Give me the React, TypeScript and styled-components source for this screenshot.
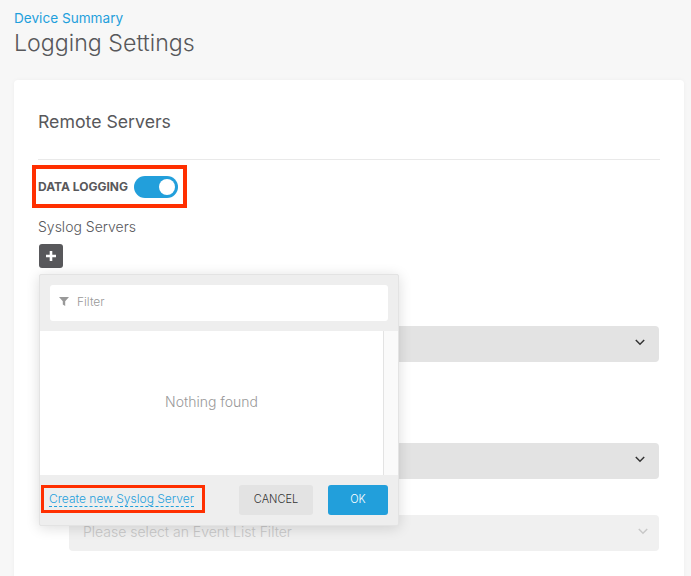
import React from "react";
import styled, { createGlobalStyle } from "styled-components";

const Global = createGlobalStyle`
  html, body { margin: 0; padding: 0; height: 100%; background: #f7f7f7; overflow: hidden; }
  body { font-family: Inter, Roboto, "Liberation Sans", sans-serif; color: #58585b; }
  * { box-sizing: border-box; }
`;

const Page = styled.div`
  width: 691px;
  height: 576px;
  overflow: hidden;
  padding: 10px 7px 0 14px;
`;
const Crumb = styled.a`
  display: block;
  font-size: 13.6px;
  font-weight: 400;
  line-height: 16px;
  color: #1fa0dc;
`;
const Title = styled.h1`
  margin: 1px 0 0;
  font-size: 23.2px;
  font-weight: 300;
  line-height: 33px;
  color: #58585b;
`;
const Card = styled.section`
  position: relative;
  margin-top: 20px;
  height: 600px;
  background: #fff;
  border-radius: 4px 4px 0 0;
  padding: 30px 24px 0 24px;
  box-shadow: 0 0 4px rgba(0, 0, 0, 0.04);
`;
const CardTitle = styled.h2`
  margin: 0;
  font-size: 17.7px;
  font-weight: 400;
  line-height: 24px;
  height: 50px;
  color: #58585b;
  border-bottom: 1px solid #e9e9e9;
`;
const Highlight = styled.div`
  display: inline-flex;
  align-items: center;
  gap: 6px;
  margin: 5px 0 0 -6px;
  width: 155px;
  height: 43px;
  padding-left: 2px;
  border: 4px solid #ff2f00;
`;
const ToggleLabel = styled.span`
  font-size: 12px;
  font-weight: 700;
  color: #58585b;
  white-space: nowrap;
`;
const Toggle = styled.span`
  position: relative;
  width: 44px;
  height: 22px;
  border-radius: 11px;
  background: #229fdb;
  flex: none;
  &::after {
    content: "";
    position: absolute;
    top: 3px;
    right: 3px;
    width: 16px;
    height: 16px;
    border-radius: 50%;
    background: #fff;
  }
`;
const FieldTitle = styled.div`
  margin-top: 9px;
  font-size: 14px;
  line-height: 20px;
  font-weight: 300;
  color: #58585b;
`;
const PlusButton = styled.button`
  display: flex;
  align-items: center;
  justify-content: center;
  margin: 7px 0 0 1px;
  width: 24px;
  height: 24px;
  padding: 0;
  border: 0;
  border-radius: 3px;
  background: #58585b;
`;
const Selects = styled.div`
  margin-top: 58px;
  margin-left: 31px;
  width: 590px;
`;
const Select = styled.div<{ $gap: number; $disabled?: boolean }>`
  display: flex;
  align-items: center;
  justify-content: space-between;
  height: 36px;
  margin-top: ${(p) => p.$gap}px;
  padding: 0 ${(p) => (p.$disabled ? 11 : 14)}px 4px 14px;
  border-radius: 4px;
  font-size: 14px;
  font-weight: 300;
  background: ${(p) => (p.$disabled ? "#f0f0f0" : "#e3e3e3")};
  color: ${(p) => (p.$disabled ? "#c8c8c8" : "#333")};
`;
const Popover = styled.div`
  position: absolute;
  left: 25px;
  top: 194px;
  width: 360px;
  height: 252px;
  display: flex;
  flex-direction: column;
  background: #eee;
  border: 1px solid #e3e3e3;
  border-radius: 2px;
  box-shadow: 0 2px 14px rgba(0, 0, 0, 0.14);
`;
const FilterBox = styled.div`
  display: flex;
  align-items: center;
  gap: 8px;
  margin: 10px;
  height: 36px;
  padding: 0 0 3px 9px;
  background: #fff;
  border-radius: 3px;
  font-size: 12px;
  font-weight: 300;
  color: #999;
`;
const ListArea = styled.div`
  display: flex;
  height: 144px;
`;
const List = styled.div`
  flex: 1;
  display: flex;
  align-items: center;
  justify-content: center;
  padding-bottom: 4px;
  background: #fff;
  font-size: 14px;
  font-weight: 300;
  color: #999;
`;
const ScrollTrack = styled.div`
  width: 15px;
  background: #fafafa;
  border-left: 1px solid #e3e3e3;
`;
const Footer = styled.div`
  flex: 1;
  display: flex;
  align-items: flex-start;
  padding: 10px 10px 0 1px;
`;
const LinkBox = styled.div`
  display: flex;
  align-items: center;
  justify-content: flex-start;
  padding-left: 5px;
  width: 164px;
  height: 28px;
  border: 3px solid #ff2f00;
`;
const CreateLink = styled.a`
  font-size: 12px;
  font-weight: 300;
  line-height: 15px;
  color: #1fa0dc;
  border-bottom: 1px dashed #1fa0dc;
  white-space: nowrap;
`;
const Actions = styled.div`
  margin-left: auto;
  display: flex;
  gap: 15px;
`;
const ActionButton = styled.button<{ $primary?: boolean }>`
  width: ${(p) => (p.$primary ? 60 : 74)}px;
  height: 30px;
  padding: 0 0 2px;
  border: 0;
  border-radius: 3px;
  font-family: inherit;
  font-size: 11px;
  font-weight: 300;
  background: ${(p) => (p.$primary ? "#229fdb" : "#e3e3e3")};
  color: ${(p) => (p.$primary ? "#fff" : "#333")};
`;

const Chevron = ({ color }: { color: string }) => (
  <svg width="10" height="7" viewBox="0 0 10 7" fill="none">
    <path d="M0.8 1 L5 5.2 L9.2 1" stroke={color} strokeWidth="1.5" />
  </svg>
);

export default function App() {
  return (
    <Page>
      <Global />
      <Crumb>Device Summary</Crumb>
      <Title>Logging Settings</Title>
      <Card>
        <CardTitle>Remote Servers</CardTitle>
        <Highlight>
          <ToggleLabel>DATA LOGGING</ToggleLabel>
          <Toggle />
        </Highlight>
        <FieldTitle>Syslog Servers</FieldTitle>
        <PlusButton aria-label="Add">
          <svg width="12" height="12" viewBox="0 0 12 12">
            <path d="M4.7 1h2.6v3.7H11v2.6H7.3V11H4.7V7.3H1V4.7h3.7z" fill="#fff" />
          </svg>
        </PlusButton>
        <Selects>
          <Select $gap={0}>
            <span />
            <Chevron color="#333" />
          </Select>
          <Select $gap={81}>
            <span />
            <Chevron color="#333" />
          </Select>
          <Select $gap={36} $disabled>
            <span>Please select an Event List Filter</span>
            <Chevron color="#c8c8c8" />
          </Select>
        </Selects>
        <Popover>
          <FilterBox>
            <svg width="10" height="9" viewBox="0 0 10 9">
              <path d="M0 0h10L6.2 4.2V9L3.8 7.6V4.2z" fill="#999" />
            </svg>
            Filter
          </FilterBox>
          <ListArea>
            <List>Nothing found</List>
            <ScrollTrack />
          </ListArea>
          <Footer>
            <LinkBox>
              <CreateLink>Create new Syslog Server</CreateLink>
            </LinkBox>
            <Actions>
              <ActionButton>CANCEL</ActionButton>
              <ActionButton $primary>OK</ActionButton>
            </Actions>
          </Footer>
        </Popover>
      </Card>
    </Page>
  );
}
